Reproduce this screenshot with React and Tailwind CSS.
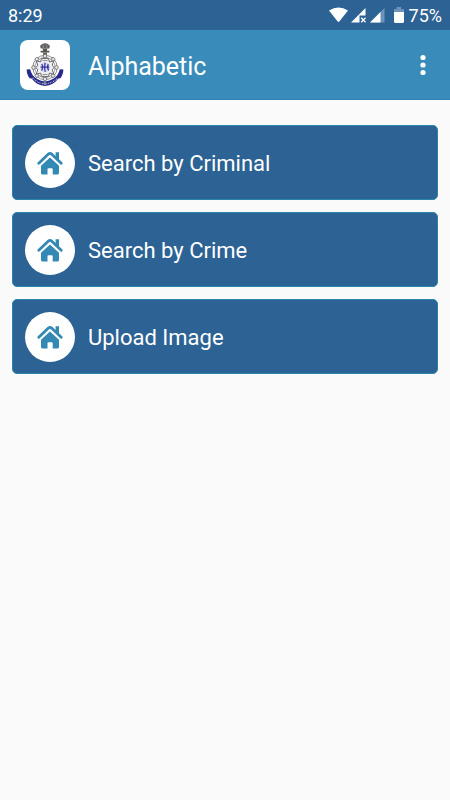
const items = ["Search by Criminal", "Search by Crime", "Upload Image"];

const studs = [0, 45, 90, 135, 180, 225, 270, 315];

function HomeIcon() {
  return (
    <svg viewBox="0 0 26 24" className="h-6 w-[26px]" fill="none" aria-hidden="true">
      <path d="M18.6 1.2H22V9.4L18.6 6.2Z" fill="#3388b4" />
      <path d="M1.8 12.2 11.4 3.1Q13 1.7 14.6 3.1L24.2 12.2" stroke="#3388b4" strokeWidth="2.8" strokeLinecap="round" />
      <path
        d="M13 6.6 22 14.8V22.1Q22 23.5 20.6 23.5H15.7V18.2Q15.7 17.2 14.7 17.2H11.5Q10.5 17.2 10.5 18.2V23.5H5.4Q4 23.5 4 22.1V14.8Z"
        fill="#3388b4"
      />
    </svg>
  );
}

function Emblem() {
  return (
    <svg viewBox="0 0 50 50" className="h-full w-full" fill="none" role="img" aria-label="Police emblem">
      {/* lion capital */}
      <path d="M21.8 4.2Q25 2.2 28.2 4.2L30 6 29.2 8.6H20.8L20 6Z" fill="#62625f" />
      <path d="M23.3 4.6V8M26.7 4.6V8" stroke="#b5b5b0" strokeWidth="0.6" />
      <path d="M22.6 8.6H27.4L26.8 10.8H23.2ZM20.6 10.8H29.4V12.4H20.6Z" fill="#55554f" />
      <path d="M23 12.4H27V15H23Z" fill="#66665f" />
      {/* star wheel */}
      <circle cx="25" cy="27.5" r="12.2" stroke="#6f6f73" strokeWidth="0.8" />
      <circle cx="25" cy="27.5" r="10.2" stroke="#a2a2a5" strokeWidth="1" />
      {studs.map((a) => (
        <circle key={a} cx="25" cy="16" r="1.8" fill="#e8e8e8" stroke="#66666a" strokeWidth="0.8" transform={`rotate(${a} 25 27.5)`} />
      ))}
      <path
        d="M21.4 18.6H28.6L29.4 22 33.8 20.8 32.2 25.2 34 27.5 32.2 29.8 33.8 34.2 29.4 33 28.6 36.4H21.4L20.6 33 16.2 34.2 17.8 29.8 16 27.5 17.8 25.2 16.2 20.8 20.6 22Z"
        fill="#f3f3f3"
        stroke="#66666b"
      />
      <path d="M22.4 20.6H27.6M22.4 34.4H27.6" stroke="#77777c" strokeWidth="0.8" />
      <circle cx="25" cy="27.3" r="5.2" fill="#dadaf0" />
      <path d="M21.8 24Q23.6 27 21.6 30.6M25.2 22.8Q23.8 27 25.2 31.8M28.2 24Q26.8 27 28.6 30.6M20.6 27.2H29.2" stroke="#3434a0" strokeWidth="1.2" />
      {/* ribbon */}
      <path
        d="M6.6 29.6 10.2 29.2Q11.6 35.4 16.4 38.6 20 41 25 41.4 30 41 33.600 38.6 38.4 35.4 39.8 29.2L43.4 29.6Q43.400 33.600 41.600 36.600L40.400 38.200 38.400 38.400Q33.400 45.200 25 46 16.600 45.200 11.600 38.400L9.600 38.200 8.400 36.600Q6.600 33.600 6.6 29.600Z"
        fill="#29298c"
      />
      <path
        d="M12.6 38Q17 43.2 25 43.8 33 43.2 37.4 38"
        stroke="#b9b9de"
        strokeWidth="1.2"
        strokeDasharray="1.2 1 0.7 0.8"
      />
      <path d="M22.6 43.6 25 41.8 27.4 43.6 25 45.4Z" fill="#8a8a98" />
    </svg>
  );
}

function StatusIcons() {
  return (
    <svg viewBox="0 0 76 18" className="h-[18px] w-[76px]" fill="none" aria-hidden="true">
      <path d="M0 3.6Q9.5 -2.6 19 3.6L10.3 14.5Q9.5 15.3 8.7 14.5Z" fill="#fff" />
      <path d="M22 15.5 36.5 1V8.5H30.5V15.5Z" fill="#fff" />
      <path d="M32.2 10.7 36.5 15.3M36.5 10.7 32.2 15.3" stroke="#fff" strokeWidth="1.3" />
      <path d="M41 15.5 55.5 1V15.5Z" fill="#6e93bb" />
      <path d="M41 15.5 51.5 5V15.5Z" fill="#fff" />
      <path d="M67.5 0H72V2H75V5H65V2H67.5Z" fill="#6e93bb" />
      <path d="M65 5H75V14.5Q75 16 73.5 16H66.5Q65 16 65 14.5Z" fill="#fff" />
    </svg>
  );
}

export default function App() {
  return (
    <div className="min-h-screen bg-[#fafafa] font-[Roboto,sans-serif] text-white">
      <div className="flex h-[30px] items-center justify-between bg-[#2c6294] px-2 pt-px text-lg">
        <span>8:29</span>
        <div className="flex items-center gap-1">
          <StatusIcons />
          <span>75%</span>
        </div>
      </div>

      <header className="flex h-[70px] items-center border-b border-[#2c7fae] bg-[#398cba] pr-3 pl-5">
        <div className="h-[50px] w-[50px] shrink-0 overflow-hidden rounded-lg bg-white">
          <Emblem />
        </div>
        <h1 className="ml-[18px] flex-1 pt-1 text-[25px] leading-8">Alphabetic</h1>
        <button type="button" aria-label="More options" className="flex h-10 w-[30px] items-center justify-center">
          <svg viewBox="0 0 6 22" className="h-[22px] w-[6px]" fill="currentColor" aria-hidden="true">
            <circle cx="3" cy="3.5" r="2.6" />
            <circle cx="3" cy="11" r="2.6" />
            <circle cx="3" cy="18.5" r="2.6" />
          </svg>
        </button>
      </header>

      <main className="flex flex-col gap-3 px-3 pt-[25px]">
        {items.map((label) => (
          <button
            key={label}
            type="button"
            className="flex h-[75px] w-full items-center gap-[13px] rounded-[5px] border border-[#2a85ab] bg-[#2c6294] px-3 text-left text-[22px] leading-7"
          >
            <span className="flex h-[50px] w-[50px] shrink-0 items-center justify-center rounded-full bg-white">
              <HomeIcon />
            </span>
            <span className="pt-0.5">{label}</span>
          </button>
        ))}
      </main>
    </div>
  );
}
